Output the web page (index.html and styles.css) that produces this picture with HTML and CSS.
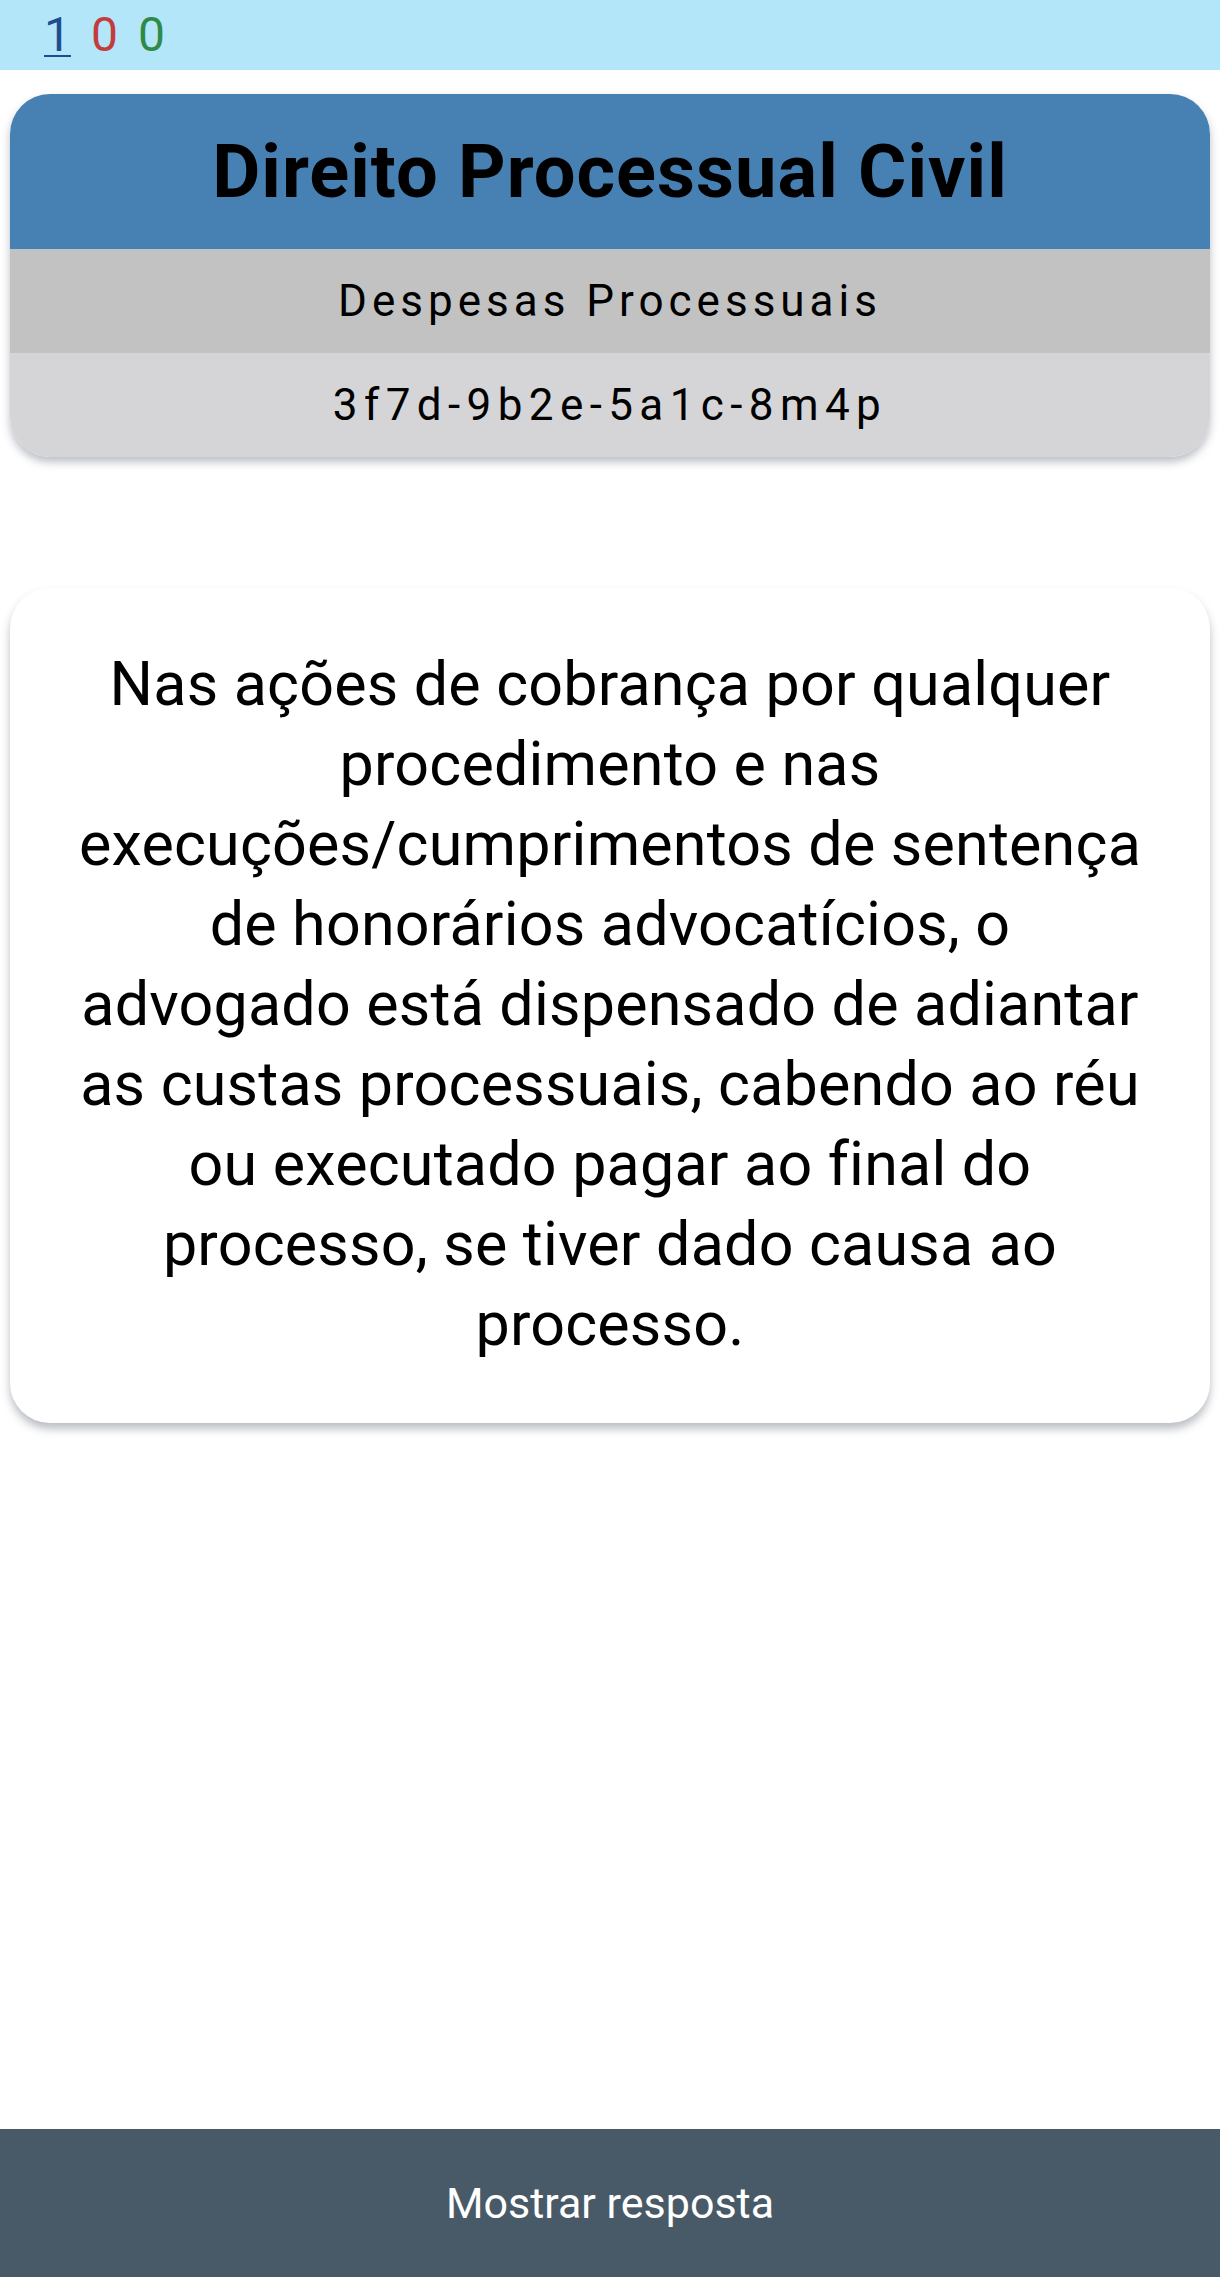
FILE: index.html
```html
<!DOCTYPE html>
<html lang="pt">
<head>
<meta charset="utf-8">
<title>Direito Processual Civil</title>
<link rel="stylesheet" href="styles.css">
</head>
<body>
<div class="page">
  <div class="topbar">
    <span class="count count-blue">1</span>
    <span class="count count-red">0</span>
    <span class="count count-green">0</span>
  </div>
  <main class="content">
    <section class="header-card">
      <div class="header-title">Direito Processual Civil</div>
      <div class="header-sub">Despesas Processuais</div>
      <div class="header-code">3f7d-9b2e-5a1c-8m4p</div>
    </section>
    <section class="question-card">
      <p class="question-text">Nas ações de cobrança por qualquer procedimento e nas execuções/cumprimentos de sentença de honorários advocatícios, o advogado está dispensado de adiantar as custas processuais, cabendo ao réu ou executado pagar ao final do processo, se tiver dado causa ao processo.</p>
    </section>
  </main>
  <button class="answer-btn" type="button">Mostrar resposta</button>
</div>
</body>
</html>
```
FILE: styles.css
```css
html, body {
  margin: 0;
  padding: 0;
  background: #ffffff;
}
body {
  font-family: Roboto, "Noto Sans", Arial, sans-serif;
  color: #000;
}
.page {
  min-height: 100vh;
  display: flex;
  flex-direction: column;
}
.topbar {
  height: 70px;
  background: #b3e6f8;
  display: flex;
  align-items: center;
  gap: 20px;
  padding-left: 44px;
  box-sizing: border-box;
}
.count {
  font-size: 48px;
  line-height: 1;
  font-weight: 400;
}
.count-blue {
  color: #1f4c90;
  text-decoration: underline;
  text-decoration-thickness: 2px;
  text-underline-offset: 4px;
}
.count-red { color: #c43b3b; }
.count-green { color: #2e8a46; }

.content {
  padding: 24px 10px 0;
  display: flex;
  flex-direction: column;
}
.header-card {
  border-radius: 40px;
  overflow: hidden;
  box-shadow: 0 5px 8px rgba(60, 70, 90, 0.35);
}
.header-title {
  height: 155px;
  background: #4781b3;
  display: flex;
  align-items: center;
  justify-content: center;
  font-size: 74px;
  font-weight: 700;
  letter-spacing: 1px;
}
.header-sub,
.header-code {
  height: 104px;
  display: flex;
  align-items: center;
  justify-content: center;
  font-size: 44px;
  letter-spacing: 5px;
}
.header-sub { background: #c2c2c2; }
.header-code {
  background: #d5d5d7;
  letter-spacing: 6.4px;
}

.question-card {
  margin-top: 131px;
  background: #fff;
  border-radius: 40px;
  box-shadow: 0 6px 8px rgba(60, 70, 90, 0.35);
  padding: 56px 62px 59px;
}
.question-text {
  margin: 0;
  text-align: center;
  font-size: 61px;
  letter-spacing: 0.2px;
  line-height: 80px;
}
.answer-btn {
  margin-top: auto;
  height: 148px;
  border: 0;
  background: #485a67;
  color: #fff;
  font-family: inherit;
  font-size: 43px;
  width: 100%;
}
```
